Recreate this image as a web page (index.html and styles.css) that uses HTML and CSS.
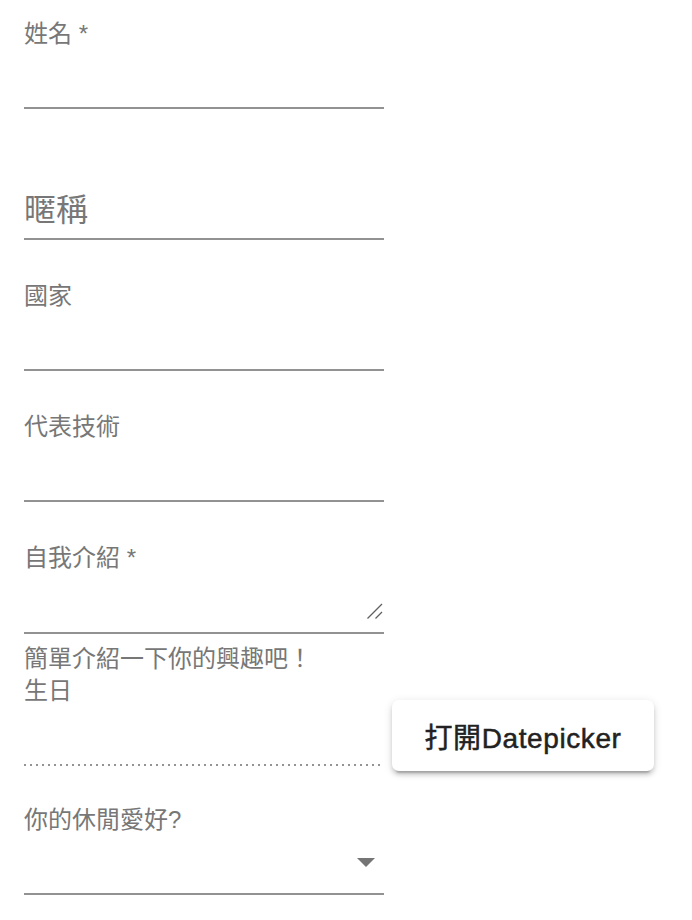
FILE: index.html
```html
<!DOCTYPE html>
<html lang="zh-Hant">
<head>
<meta charset="utf-8">
<title>表單</title>
<link rel="stylesheet" href="styles.css">
</head>
<body>
<form class="form">
  <div class="field">
    <label class="label">姓名 *</label>
    <div class="zone"></div>
  </div>

  <div class="field">
    <div class="zone zone--tall">
      <label class="label label--large">暱稱</label>
    </div>
  </div>

  <div class="field">
    <label class="label">國家</label>
    <div class="zone"></div>
  </div>

  <div class="field">
    <label class="label">代表技術</label>
    <div class="zone"></div>
  </div>

  <div class="field field--textarea">
    <label class="label">自我介紹 *</label>
    <div class="zone zone--textarea">
      <svg class="resizer" width="16" height="16" viewBox="0 0 16 16">
        <path d="M0.5 15.5L15 1M8.5 15.5L15 9" stroke="#5f5f5f" stroke-width="1.3" fill="none"/>
      </svg>
    </div>
  </div>
  <p class="helper">簡單介紹一下你的興趣吧！</p>

  <div class="date-row">
    <div class="field field--date">
      <label class="label">生日</label>
      <div class="zone zone--dotted"></div>
    </div>
    <button type="button" class="btn">打開Datepicker</button>
  </div>

  <div class="field field--select">
    <label class="label">你的休閒愛好?</label>
    <div class="zone zone--select">
      <svg class="arrow" width="18" height="9" viewBox="0 0 18 9"><path d="M0 0H18L9 9Z" fill="#757575"/></svg>
    </div>
  </div>
</form>
</body>
</html>
```

FILE: styles.css
```css
html, body {
  margin: 0;
  padding: 0;
  background: #ffffff;
}

.form {
  padding: 22px 0 0 24px;
  font-family: "Liberation Sans", "Noto Sans CJK TC", sans-serif;
  color: #757575;
}

.field {
  width: 360px;
  margin-bottom: 44px;
}

.label {
  display: block;
  font-size: 24px;
  line-height: 24px;
  height: 24px;
  color: #777777;
  white-space: nowrap;
}

.label--large {
  font-size: 32px;
  line-height: 32px;
  height: 32px;
}

.zone {
  height: 61px;
  border-bottom: 2px solid #929292;
}

.zone--tall {
  height: 44px;
  padding-top: 41px;
}

.field--textarea {
  margin-bottom: 0;
}

.zone--textarea {
  height: 62px;
  display: flex;
  justify-content: flex-end;
  align-items: flex-end;
}

.resizer {
  display: block;
  margin: 0 1px 13px 0;
}

.helper {
  margin: 13px 0 8px 0;
  font-size: 24px;
  line-height: 24px;
  color: #777777;
}

.date-row {
  display: flex;
  align-items: flex-start;
  gap: 8px;
  margin-bottom: 37px;
}

.field--date {
  margin-bottom: 0;
}

.zone--dotted {
  border-bottom: none;
  box-sizing: border-box;
  height: 63px;
  background-image: linear-gradient(to right, rgba(0, 0, 0, 0.42) 33%, transparent 0%);
  background-size: 6px 2px;
  background-repeat: repeat-x;
  background-position: left bottom;
}

.btn {
  margin-top: 21px;
  width: 262px;
  height: 71px;
  border: none;
  border-radius: 7px;
  background: #ffffff;
  color: #222222;
  font-family: "Liberation Sans", "Noto Sans CJK TC", sans-serif;
  font-weight: 400;
  font-size: 28px;
  letter-spacing: 0.6px;
  -webkit-text-stroke: 0.5px #222222;
  padding: 0;
  box-shadow: 0 6px 2px -4px rgba(0, 0, 0, 0.2), 0 4px 4px 0 rgba(0, 0, 0, 0.14), 0 2px 10px 0 rgba(0, 0, 0, 0.12);
  cursor: pointer;
}

.zone--select {
  display: flex;
  justify-content: flex-end;
  align-items: flex-end;
}

.arrow {
  display: block;
  margin: 0 9px 26px 0;
}
```
